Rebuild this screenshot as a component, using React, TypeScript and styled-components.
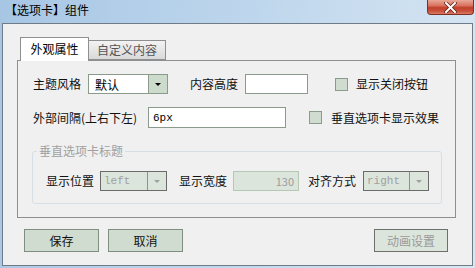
import React from 'react';
import styled, { createGlobalStyle } from 'styled-components';

const GlobalStyle = createGlobalStyle`
  html, body {
    margin: 0;
    padding: 0;
    background: #ffffff;
  }
  body {
    font-family: 'Noto Sans CJK SC', 'DejaVu Sans', sans-serif;
    font-size: 12px;
    color: #000000;
  }
`;

const Window = styled.div`
  width: 475px;
  height: 268px;
  display: flex;
  flex-direction: column;
  background: linear-gradient(100deg, #a7c6e4 0%, #bcd5ec 45%, #c9ddef 70%, #d9e7f3 100%);
  box-sizing: border-box;
`;

const TitleBar = styled.div`
  height: 23px;
  display: flex;
  justify-content: space-between;
  align-items: flex-start;
  padding-left: 5px;
  flex-shrink: 0;
`;

const Title = styled.div`
  padding-top: 3px;
  line-height: 14px;
  font-size: 12px;
  color: #000000;
`;

const CloseButton = styled.div`
  width: 47px;
  height: 15px;
  margin-right: 1px;
  box-sizing: border-box;
  border: 1px solid #7d3125;
  border-top: none;
  border-radius: 0 0 4px 4px;
  background: linear-gradient(#e9a898 0%, #d9735f 40%, #c0402c 55%, #c9523c 80%, #dc7d66 100%);
  display: flex;
  align-items: center;
  justify-content: center;
`;

const Client = styled.div`
  flex: 1;
  margin: 0 2px 2px 2px;
  border: 1px solid #6f7b87;
  background: #f0f0f0;
  padding: 13px 0 0 14px;
  display: flex;
  flex-direction: column;
`;

const TabControl = styled.div`
  width: 439px;
  display: flex;
  flex-direction: column;
`;

const TabStrip = styled.div`
  height: 23px;
  display: flex;
  align-items: flex-end;
  padding-left: 3px;
`;

const Tab = styled.div<{ $active?: boolean; $w: number }>`
  width: ${p => p.$w}px;
  height: ${p => (p.$active ? 24 : 20)}px;
  box-sizing: border-box;
  border: 1px solid #8d8f91;
  border-bottom: ${p => (p.$active ? 'none' : '1px solid #8d8f91')};
  margin-bottom: ${p => (p.$active ? -1 : 0)}px;
  margin-left: ${p => (p.$active ? 0 : -1)}px;
  background: ${p => (p.$active ? '#ffffff' : 'linear-gradient(#f3f3f3, #e6e6e6 50%, #d9d9d9)')};
  color: ${p => (p.$active ? '#000000' : '#555555')};
  position: relative;
  z-index: ${p => (p.$active ? 2 : 1)};
  display: flex;
  justify-content: center;
  padding-top: ${p => (p.$active ? 4 : 2)}px;
  line-height: 14px;
  font-size: 12px;
`;

const Panel = styled.div`
  height: 158px;
  box-sizing: border-box;
  border: 1px solid #8d8f91;
  background: #f0f0f0;
  padding: 13px 0 0 15px;
  display: flex;
  flex-direction: column;
`;

const Row = styled.div<{ $mt?: number; $h?: number }>`
  display: flex;
  align-items: center;
  height: ${p => p.$h ?? 20}px;
  margin-top: ${p => p.$mt ?? 0}px;
`;

const Label = styled.span<{ $w?: number; $ml?: number; $muted?: boolean }>`
  width: ${p => (p.$w ? `${p.$w}px` : 'auto')};
  margin-left: ${p => p.$ml ?? 0}px;
  flex-shrink: 0;
  white-space: nowrap;
  line-height: 14px;
  font-size: 12px;
  color: ${p => (p.$muted ? '#9a9a9a' : '#111111')};
`;

const SelectBox = styled.div<{ $w: number; $ml: number; $disabled?: boolean }>`
  width: ${p => p.$w}px;
  height: 100%;
  margin-left: ${p => p.$ml}px;
  box-sizing: border-box;
  border: 1px solid ${p => (p.$disabled ? '#6b6b6b' : '#8b9b8b')};
  background: ${p => (p.$disabled ? '#dce5dc' : '#ffffff')};
  display: flex;
  flex-shrink: 0;
`;

const SelectValue = styled.div<{ $mono?: boolean; $disabled?: boolean }>`
  flex: 1;
  display: flex;
  align-items: center;
  padding-left: ${p => (p.$mono ? 3 : 6)}px;
  font-family: ${p => (p.$mono ? "'Liberation Mono', monospace" : "'Noto Sans CJK SC', sans-serif")};
  font-size: ${p => (p.$mono ? 11 : 12)}px;
  color: ${p => (p.$disabled ? '#a0a0a0' : '#000000')};
`;

const SelectArrow = styled.div<{ $disabled?: boolean }>`
  width: 18px;
  border-left: 1px solid ${p => (p.$disabled ? '#8a948a' : '#8b9b8b')};
  background: ${p => (p.$disabled ? '#dce5dc' : '#cddbcd')};
  display: flex;
  align-items: center;
  justify-content: center;

  &::after {
    content: '';
    width: 0;
    height: 0;
    border-left: 3px solid transparent;
    border-right: 3px solid transparent;
    border-top: 3px solid ${p => (p.$disabled ? '#a0a0a0' : '#000000')};
  }
`;

const TextBox = styled.div<{ $w: number; $ml: number; $disabled?: boolean; $mono?: boolean }>`
  width: ${p => p.$w}px;
  height: 100%;
  margin-left: ${p => p.$ml}px;
  box-sizing: border-box;
  border: 1px solid ${p => (p.$disabled ? '#b5c7b5' : '#8b9b8b')};
  background: ${p => (p.$disabled ? '#dce5dc' : '#ffffff')};
  display: flex;
  align-items: center;
  justify-content: ${p => (p.$disabled ? 'flex-end' : 'flex-start')};
  padding: 0 4px;
  font-family: ${p => (p.$mono ? "'Liberation Mono', monospace" : "'Noto Sans CJK SC', sans-serif")};
  font-size: 11px;
  color: ${p => (p.$disabled ? '#9c9c9c' : '#000000')};
  flex-shrink: 0;
`;

const CheckBox = styled.div<{ $ml: number }>`
  width: 13px;
  height: 13px;
  margin-left: ${p => p.$ml}px;
  box-sizing: border-box;
  border: 1px solid #8b9b8b;
  background: #d0dcd0;
  flex-shrink: 0;
`;

const Group = styled.fieldset`
  margin: 16px 0 0 -1px;
  width: 410px;
  box-sizing: border-box;
  border: 1px solid #d5dfe5;
  border-radius: 3px;
  padding: 13px 0 12px 13px;
`;

const Legend = styled.legend`
  margin-left: -9px;
  padding: 0 2px;
  line-height: 14px;
  font-size: 12px;
  color: #a0a0a0;
`;

const ButtonBar = styled.div`
  width: 439px;
  box-sizing: border-box;
  display: flex;
  gap: 9px;
  margin-top: 11px;
  padding: 0 8px 0 7px;
`;

const Button = styled.div<{ $w: number; $disabled?: boolean }>`
  width: ${p => p.$w}px;
  height: 23px;
  box-sizing: border-box;
  border: 1px solid ${p => (p.$disabled ? '#6f6f6f' : '#7f8f7f')};
  background: ${p => (p.$disabled ? '#dce5dc' : '#d0dcd0')};
  display: flex;
  align-items: center;
  justify-content: center;
  font-size: 12px;
  color: ${p => (p.$disabled ? '#9a9a9a' : '#111111')};
  margin-left: ${p => (p.$disabled ? 'auto' : '0')};
`;

const Select: React.FC<{ w: number; ml: number; value: string; disabled?: boolean; mono?: boolean }> = ({
  w,
  ml,
  value,
  disabled,
  mono,
}) => (
  <SelectBox $w={w} $ml={ml} $disabled={disabled}>
    <SelectValue $mono={mono} $disabled={disabled}>{value}</SelectValue>
    <SelectArrow $disabled={disabled} />
  </SelectBox>
);

const App: React.FC = () => {
  return (
    <>
      <GlobalStyle />
      <Window>
        <TitleBar>
          <Title>【选项卡】组件</Title>
          <CloseButton>
            <svg width="13" height="11" viewBox="0 0 13 11">
              <path d="M2 1 L11 10 M11 1 L2 10" stroke="#5a2018" strokeWidth="3.4" strokeLinecap="square" />
              <path d="M2 1 L11 10 M11 1 L2 10" stroke="#ffffff" strokeWidth="2" strokeLinecap="square" />
            </svg>
          </CloseButton>
        </TitleBar>

        <Client>
          <TabControl>
            <TabStrip>
              <Tab $active $w={69}>外观属性</Tab>
              <Tab $w={78}>自定义内容</Tab>
            </TabStrip>
            <Panel>
              <Row>
                <Label $w={48}>主题风格</Label>
                <Select w={80} ml={7} value="默认" />
                <Label $w={48} $ml={22}>内容高度</Label>
                <TextBox $w={63} $ml={7} />
                <CheckBox $ml={27} />
                <Label $ml={8}>显示关闭按钮</Label>
              </Row>
              <Row $mt={13} $h={21}>
                <Label $w={108}>外部间隔(上右下左)</Label>
                <TextBox $w={138} $ml={7} $mono>6px</TextBox>
                <CheckBox $ml={23} />
                <Label $ml={9}>垂直选项卡显示效果</Label>
              </Row>
              <Group>
                <Legend>垂直选项卡标题</Legend>
                <Row>
                  <Label $w={48}>显示位置</Label>
                  <Select w={67} ml={6} value="left" disabled mono />
                  <Label $w={48} $ml={12}>显示宽度</Label>
                  <TextBox $w={66} $ml={6} $disabled>130</TextBox>
                  <Label $w={48} $ml={9}>对齐方式</Label>
                  <Select w={66} ml={7} value="right" disabled mono />
                </Row>
              </Group>
            </Panel>
          </TabControl>

          <ButtonBar>
            <Button $w={75}>保存</Button>
            <Button $w={75}>取消</Button>
            <Button $w={74} $disabled>动画设置</Button>
          </ButtonBar>
        </Client>
      </Window>
    </>
  );
};

export default App;
